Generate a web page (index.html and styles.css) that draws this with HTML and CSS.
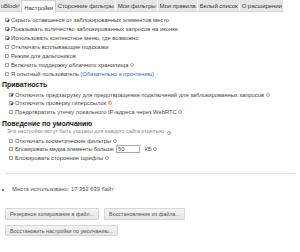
FILE: index.html
```html
<!DOCTYPE html>
<html lang="ru">
<head>
<meta charset="utf-8">
<link rel="stylesheet" href="styles.css">
</head>
<body>
<nav class="tabs">
  <span class="tab logo">uBlock<sub>0</sub></span>
  <span class="tab active">Настройки</span>
  <span class="tab">Сторонние фильтры</span>
  <span class="tab">Мои фильтры</span>
  <span class="tab">Мои правила</span>
  <span class="tab">Белый список</span>
  <span class="tab">О расширении</span>
</nav>
<main class="content">
  <ul class="opts top">
    <li><span class="cb on"></span>Скрыть оставшееся от заблокированных элементов место</li>
    <li><span class="cb on"></span>Показывать количество заблокированных запросов на иконке</li>
    <li><span class="cb on"></span>Использовать контекстное меню, где возможно</li>
    <li><span class="cb"></span>Отключать всплывающие подсказки</li>
    <li><span class="cb"></span>Режим для дальтоников</li>
    <li><span class="cb"></span>Включить поддержку облачного хранилища <span class="info">i</span></li>
    <li><span class="cb"></span>Я опытный пользователь <a class="link">(Обязательно к прочтению)</a></li>
  </ul>
  <h3 class="sect s1">Приватность</h3>
  <ul class="opts sub p1">
    <li><span class="cb on"></span>Отключить предзагрузку для предотвращения подключений для заблокированных запросов <span class="info">i</span></li>
    <li><span class="cb on"></span>Отключить проверку гиперссылок <span class="info warn">i</span></li>
    <li><span class="cb"></span>Предотвратить утечку локального IP-адреса через WebRTC <span class="info warn">i</span></li>
  </ul>
  <h3 class="sect s2">Поведение по умолчанию</h3>
  <p class="note">Эти настройки могут быть указаны для каждого сайта отдельно <span class="info">i</span></p>
  <ul class="opts sub p2">
    <li><span class="cb"></span>Отключать косметические фильтры <span class="info">i</span></li>
    <li><span class="cb"></span><span class="media">Блокировать медиа элементы больше</span><span class="num">50</span>КБ <span class="info">i</span></li>
    <li><span class="cb"></span>Блокировать сторонние шрифты <span class="info">i</span></li>
  </ul>
  <hr class="rule">
  <ul class="stats">
    <li>Места использовано: 17 352 639 байт</li>
  </ul>
  <div class="buttons">
    <div class="row">
      <span class="btn">Резервное копирование в файл...</span>
      <span class="btn">Восстановление из файла...</span>
    </div>
    <div class="row">
      <span class="btn">Восстановить настройки по умолчанию...</span>
    </div>
  </div>
</main>
</body>
</html>
```
FILE: styles.css
```css
* { box-sizing: border-box; }
html, body { margin: 0; padding: 0; background: #fff; }
body {
  font-family: "Liberation Sans", Arial, sans-serif;
  font-size: 5.8px;
  color: #444;
  width: 300px;
  height: 252px;
  overflow: hidden;
}
.tabs {
  display: flex;
  width: fit-content;
  height: 12px;
  background: #f2f2f2;
  border-bottom: 1px solid #d8d8d8;
  white-space: nowrap;
}
.tab {
  display: flex;
  flex: none;
  align-items: center;
  padding: 0 1.5px;
  font-size: 6.1px;
  letter-spacing: -0.1px;
  color: #3a3a3a;
  background: #e6e6e6;
  border-right: 0.5px solid #fafafa;
}
.tab.logo { padding: 0 0.5px 0 1px; font-size: 5.8px; color: #444; }
.tab.logo sub { font-size: 3.5px; vertical-align: -1px; }
.tab.active { background: #fff; border: 0.6px solid #d0d0d0; border-bottom: none; height: 13px; padding: 0 2px; }
.content { padding: 0 0 0 5px; }
.opts { list-style: none; margin: 0; padding: 0; }
.opts li {
  display: flex;
  align-items: center;
  height: 8.6px;
  white-space: nowrap;
}
.opts.top { margin-top: 4px; }
.opts.top li { height: 8.9px; }
.opts.sub { margin-left: 4px; }
.opts.p1 { margin-top: 1.5px; }
.opts.p2 { margin-top: 1.2px; }
.cb {
  width: 4px;
  height: 4px;
  border: 0.5px solid #aaa;
  background: #f6f6f6;
  margin-right: 2px;
  position: relative;
  flex: none;
}
.cb.on::after {
  content: "";
  position: absolute;
  left: 0.8px;
  top: -0.3px;
  width: 1.2px;
  height: 2.4px;
  border: solid #333;
  border-width: 0 0.8px 0.8px 0;
  transform: rotate(40deg);
}
.info {
  display: inline-flex;
  align-items: center;
  justify-content: center;
  width: 4px;
  height: 4px;
  border: 0.5px solid #aaa;
  border-radius: 50%;
  font-size: 3px;
  color: #aaa;
  margin-left: 1.5px;
}
.info.warn { border-color: #e8906a; color: #e8906a; }
.link { color: #3a5fc8; margin-left: 1.5px; }
.sect {
  margin: 0 0 0 -3px;
  height: 8px;
  line-height: 8px;
  font-size: 7px;
  font-weight: bold;
  color: #1a1a1a;
}
.sect.s1 { margin-top: 2.7px; }
.sect.s2 { margin-top: 3.7px; }
.note {
  margin: 0.5px 0 0 2px;
  height: 7px;
  line-height: 7px;
  font-size: 5.3px;
  color: #8a8a8a;
  white-space: nowrap;
}
.media { letter-spacing: -0.15px; }
.num {
  display: inline-block;
  width: 24px;
  height: 8px;
  border: 0.5px solid #aaa;
  padding-left: 1.5px;
  line-height: 7px;
  margin: 0 5px 0 2px;
}
.rule {
  margin: 10.5px 5px 0 0;
  border: none;
  border-top: 1.5px solid #e4e4e4;
}
.stats {
  margin: 12px 0 0 0;
  padding-left: 7px;
  line-height: 7px;
  color: #555;
}
.buttons {
  display: flex;
  flex-direction: column;
  gap: 5px;
  margin-top: 15.5px;
}
.row { display: flex; gap: 5px; }
.btn {
  display: flex;
  align-items: center;
  height: 11.5px;
  padding: 0 4px;
  font-size: 5.4px;
  color: #555;
  border: 0.5px solid #d6d6d6;
  background: linear-gradient(#f4f4f4, #e6e6e6);
  border-radius: 1px;
}
```
